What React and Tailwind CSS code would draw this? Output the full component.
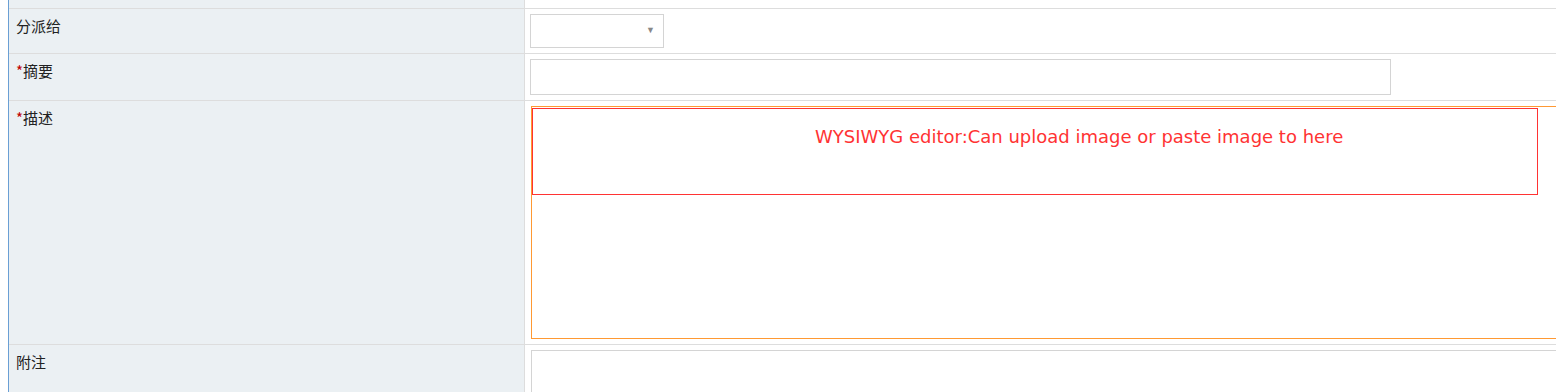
import React from "react";

const cjk = { fontFamily: '"Microsoft YaHei", "Noto Sans CJK SC", sans-serif' };

const Label = ({ required, children }) => (
    <div className="w-[515px] shrink-0 bg-[#ebf0f3] px-[7px] pt-[7px] text-[15px] leading-[20px] text-[#222]" style={cjk}>
        {required && <span className="text-[#c00000]">*</span>}
        {children}
    </div>
);

const Row = ({ label, required, children }) => (
    <div className="flex border-t border-[#dddddd]">
        <Label required={required}>{label}</Label>
        <div className="flex-1 min-w-0 border-l border-[#dddddd] bg-white py-[5px] pl-[5px]">
            {children}
        </div>
    </div>
);

export default function App() {
    return (
        <div className="h-[392px] overflow-hidden bg-white pl-[8px]">
            <div className="border-l border-[#6a9fd4]">
                {/* tail of the row above */}
                <div className="flex h-[8px]">
                    <div className="w-[515px] shrink-0 bg-[#ebf0f3]" />
                    <div className="flex-1 border-l border-[#dddddd]" />
                </div>

                <Row label="分派给">
                    <div className="relative h-[34px] w-[134px] border border-[#d4d4d4] bg-white">
                        <span className="absolute right-[8px] top-[10px] text-[9px] leading-none text-[#888]">▼</span>
                    </div>
                </Row>

                <Row label="摘要" required>
                    <input type="text" className="block h-[36px] w-[861px] border border-[#d4d4d4] bg-white outline-none" />
                </Row>

                <Row label="描述" required>
                    <div className="ml-[1px] h-[233px] w-[1040px] border border-[#ff9933] bg-white">
                        <div className="mt-[1px] h-[87px] w-[1006px] border border-[#ff3333] pl-[282px] pt-[16px]">
                            <span className="whitespace-nowrap text-[18px] leading-[22px] text-[#ff3333]" style={{ fontFamily: '"DejaVu Sans", Verdana, sans-serif' }}>
                                WYSIWYG editor:Can upload image or paste image to here
                            </span>
                        </div>
                    </div>
                </Row>

                <Row label="附注">
                    <div className="ml-[1px] h-[80px] w-[1040px] border border-[#d4d4d4] bg-white" />
                </Row>
            </div>
        </div>
    );
}
